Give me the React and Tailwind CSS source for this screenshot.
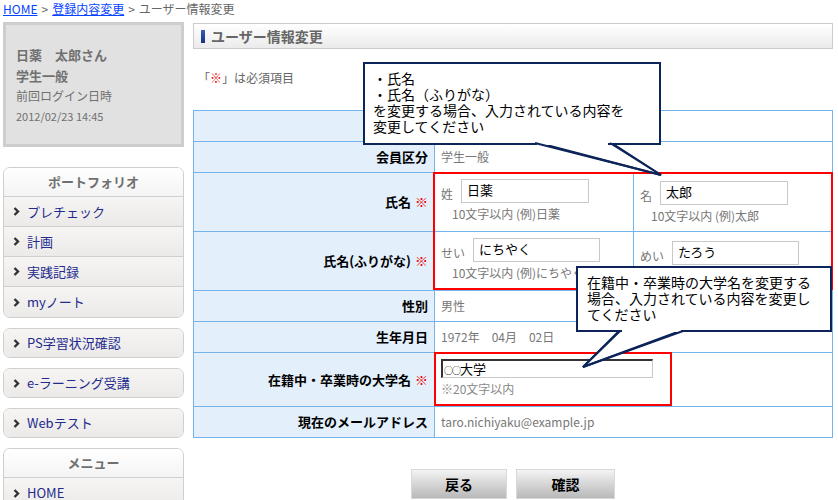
import React from 'react'

const FONT = "font-['Noto_Sans_CJK_JP','Liberation_Sans',sans-serif]"

function Chevron() {
  return (
    <svg width="7" height="9" viewBox="0 0 7 9" className="mr-[7px] shrink-0">
      <polyline points="1.5,1 5,4.5 1.5,8" fill="none" stroke="#333" strokeWidth="2.4" />
    </svg>
  )
}

function SideItem({ children, last, h }) {
  return (
    <div className={`flex items-center pl-[9px] bg-gradient-to-b from-[#f6f5f4] to-[#eceae9] ${h} ${last ? '' : 'border-b border-[#cfcfcf]'}`}>
      <Chevron />
      <span className="text-[13px] text-[#222a8c]">{children}</span>
    </div>
  )
}

function SideBox({ title, items }) {
  return (
    <div className="rounded-[7px] border border-[#cfcfcf] overflow-hidden">
      {title && (
        <div className="h-[29px] flex items-center justify-center bg-gradient-to-b from-white to-[#f4f4f4] border-b border-[#cfcfcf] text-[13px] font-bold text-[#707070]">
          {title}
        </div>
      )}
      {items.map((it, i) => (
        <SideItem key={it} last={i === items.length - 1} h={title ? 'h-[30px]' : 'h-[28px]'}>{it}</SideItem>
      ))}
    </div>
  )
}

const th = 'bg-[#e3effb] border border-[#74b4ea] text-right pr-[6px] text-[13px] font-bold text-black w-[241px] p-0'
const td = 'border border-[#74b4ea] pl-[6px] text-[12px] text-[#777] p-0 bg-white'
const Req = () => <span className="text-[#e00] ml-[4px]">※</span>

function NameCell({ label, value, hint, inputLeft, inputTop, inputW, first }) {
  return (
    <div className={`flex-1 h-full pl-[6px] ${first ? '' : 'border-l border-[#74b4ea]'}`}>
      <div className="flex items-end" style={{ paddingTop: inputTop }}>
        <span className="text-[12px] text-[#777] leading-[16px] mb-[1px]">{label}</span>
        <div
          className="h-[24px] border border-[#c8c8c8] bg-white text-[13px] text-black pl-[5px] leading-[20px]"
          style={{ marginLeft: inputLeft, width: inputW }}
        >
          {value}
        </div>
      </div>
      {hint && <div className="pl-[11px] mt-[3px] text-[12px] text-[#777] leading-[16px]">{hint}</div>}
    </div>
  )
}

export default function App() {
  return (
    <div className={`${FONT} w-[838px] h-[500px] overflow-hidden bg-white relative`}>
      {/* breadcrumb */}
      <div className="h-[17px] pl-[3px] text-[12px] leading-[17px] text-[#666] flex gap-[4px]">
        <a className="text-[#0645ff] underline">HOME</a>
        <span>&gt;</span>
        <a className="text-[#0645ff] underline">登録内容変更</a>
        <span>&gt;</span>
        <span>ユーザー情報変更</span>
      </div>

      <div className="flex pl-[3px]">
        {/* sidebar */}
        <div className="w-[181px] pt-[5px] flex flex-col">
          <div className="h-[125px] border-[3px] border-[#cdcdcd] bg-[#e1e1e1] pl-[10px] pt-[19px] text-[#707070]">
            <div className="text-[13px] font-bold leading-[21px]">日薬　太郎さん</div>
            <div className="text-[13px] font-bold leading-[21px]">学生一般</div>
            <div className="text-[12px] leading-[20px]">前回ログイン日時</div>
            <div className="text-[11px] leading-[20px]">2012/02/23 14:45</div>
          </div>
          <div className="mt-[20px]">
            <SideBox title="ポートフォリオ" items={['プレチェック', '計画', '実践記録', 'myノート']} />
          </div>
          <div className="mt-[10px]"><SideBox items={['PS学習状況確認']} /></div>
          <div className="mt-[10px]"><SideBox items={['e-ラーニング受講']} /></div>
          <div className="mt-[10px]"><SideBox items={['Webテスト']} /></div>
          <div className="mt-[10px]"><SideBox title="メニュー" items={['HOME']} /></div>
        </div>

        {/* main */}
        <div className="ml-[9px] w-[640px] relative pt-[6px]">
          <div className="h-[26px] border border-[#cccccc] bg-gradient-to-b from-white to-[#ebebeb] flex items-center pl-[7px]">
            <span className="w-[4px] h-[13px] bg-gradient-to-b from-[#3a5bb5] to-[#1b2f80] mr-[6px]" />
            <span className="text-[14px] font-bold text-[#666]">ユーザー情報変更</span>
          </div>
          <div className="pl-[5px] mt-[21px] text-[12px] text-[#666] leading-[16px]">
            「<span className="text-[#e00]">※</span>」は必須項目
          </div>

          <table className="mt-[24px] w-[640px] border-collapse">
            <tbody>
              <tr className="h-[31px]"><th className={th}></th><td className={td}></td></tr>
              <tr className="h-[31px]"><th className={th}>会員区分</th><td className={td}>学生一般</td></tr>
              <tr className="h-[59px]">
                <th className={th}>氏名<Req /></th>
                <td className="border border-[#74b4ea] p-0 h-[59px] align-top">
                  <div className="flex h-[58px]">
                    <NameCell first label="姓" value="日薬" hint="10文字以内 (例)日薬" inputLeft={8} inputTop={6} inputW={128} />
                    <NameCell label="名" value="太郎" hint="10文字以内 (例)太郎" inputLeft={8} inputTop={8} inputW={128} />
                  </div>
                </td>
              </tr>
              <tr className="h-[59px]">
                <th className={th}>氏名(ふりがな)<Req /></th>
                <td className="border border-[#74b4ea] p-0 h-[59px] align-top">
                  <div className="flex h-[58px]">
                    <NameCell first label="せい" value="にちやく" hint="10文字以内 (例)にちやく" inputLeft={8} inputTop={6} inputW={127} />
                    <NameCell label="めい" value="たろう" hint="10文字以内 (例)たろう" inputLeft={8} inputTop={9} inputW={127} />
                  </div>
                </td>
              </tr>
              <tr className="h-[31px]"><th className={th}>性別</th><td className={td}>男性</td></tr>
              <tr className="h-[31px]"><th className={th}>生年月日</th><td className={td}>1972年　04月　02日</td></tr>
              <tr className="h-[54px]">
                <th className={th}>在籍中・卒業時の大学名<Req /></th>
                <td className={`${td} align-top`}>
                  <div className="mt-[6px] w-[212px] h-[19px] border border-t-2 border-l-2 border-t-[#333] border-l-[#333] border-r-[#c8c8c8] border-b-[#c8c8c8] text-[13px] text-black leading-[15px] pl-[1px]">
                    <span className="text-[9px] tracking-[-1px]">○○</span>大学
                  </div>
                  <div className="mt-[3px] text-[12px] text-[#888] leading-[16px]">※20文字以内</div>
                </td>
              </tr>
              <tr className="h-[31px]"><th className={th}>現在のメールアドレス</th><td className={td}>taro.nichiyaku@example.jp</td></tr>
            </tbody>
          </table>

          <div className="flex justify-center gap-[9px] mt-[31px]">
            <button className="w-[96px] h-[30px] border border-[#d8d8d8] bg-gradient-to-b from-[#f4f4f4] to-[#b9b9b9] text-[14px] font-bold text-black">戻る</button>
            <button className="w-[99px] h-[30px] border border-[#d8d8d8] bg-gradient-to-b from-[#f4f4f4] to-[#b9b9b9] text-[14px] font-bold text-black">確認</button>
          </div>

          {/* annotations */}
          <div className="absolute left-[240px] top-[155px] w-[400px] h-[118px] border-2 border-[#f00] pointer-events-none" />
          <div className="absolute left-[241px] top-[335px] w-[238px] h-[54px] border-2 border-[#f00] pointer-events-none" />

          <svg className="absolute left-0 top-0 pointer-events-none" width="640" height="483">
            <polygon points="342,125 417,125 468,158" fill="white" stroke="#0c2459" strokeWidth="2" />
            <polygon points="427,313 490,313 390,350" fill="white" stroke="#0c2459" strokeWidth="2" />
          </svg>

          <div className="absolute left-[170px] top-[45px] w-[298px] h-[83px] border-2 border-[#0c2459] bg-white pl-[8px] pt-[6px] text-[14px] leading-[16px] text-black">
            <div>・氏名</div>
            <div>・氏名（ふりがな）</div>
            <div>を変更する場合、入力されている内容を</div>
            <div>変更してください</div>
          </div>
          <svg className="absolute left-0 top-0 pointer-events-none" width="640" height="483">
            <polygon points="344,126 415,126 415,128 344,128" fill="white" />
            <polyline points="342,126 468,158 417,126" fill="none" stroke="#0c2459" strokeWidth="2" />
          </svg>

          <div className="absolute left-[383px] top-[249px] w-[256px] h-[66px] border-2 border-[#0c2459] bg-white pl-[9px] pt-[6px] text-[14px] leading-[16px] text-black">
            <div>在籍中・卒業時の大学名を変更する</div>
            <div>場合、入力されている内容を変更し</div>
            <div>てください</div>
          </div>
          <svg className="absolute left-0 top-0 pointer-events-none" width="640" height="483">
            <polygon points="429,312 488,312 488,315 429,315" fill="white" />
            <polyline points="427,314 390,350 490,314" fill="none" stroke="#0c2459" strokeWidth="2" />
          </svg>
        </div>
      </div>
    </div>
  )
}
